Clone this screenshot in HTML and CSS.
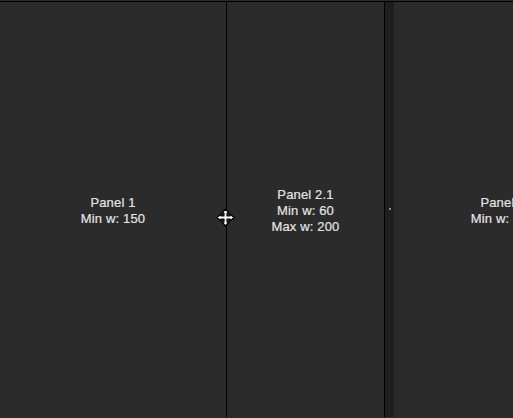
FILE: index.html
```
<!DOCTYPE html>
<html lang="en">
<head>
  <meta charset="UTF-8" />
  <title>Panels</title>
  <link rel="stylesheet" href="styles.css">
</head>
<body>
<div class="panel-group">
  <div class="panel panel-one">
    <div class="panel-label">Panel 1<br>Min w: 150</div>
  </div>
  <div class="panel panel-two">
    <div class="panel-label">Panel 2.1<br>Min w: 60<br>Max w: 200</div>
  </div>
  <div class="resize-handle"><span class="handle-dot"></span></div>
  <div class="panel panel-three">
    <div class="panel-label">Panel 3<br>Min w: 150</div>
  </div>
</div>
<!-- mouse cursor over the divider -->
<svg class="move-cursor" width="19" height="19" viewBox="0 0 19 19">
  <path d="M9.5 1 L13 5 L11 5 L11 8 L14 8 L14 6 L18 9.5 L14 13 L14 11 L11 11 L11 14 L13 14 L9.5 18 L6 14 L8 14 L8 11 L5 11 L5 13 L1 9.5 L5 6 L5 8 L8 8 L8 5 L6 5 Z" fill="#fff" stroke="#000" stroke-width="1.2" stroke-linejoin="round"/>
</svg>
</body>
</html>
```
FILE: styles.css
```
* { box-sizing: border-box; }
html, body { height:100%; }
body { margin:0; padding-top:1px; background:#2b2b2b; font-family:'Liberation Sans',Arial,sans-serif; color:#e4e4e4; overflow:hidden; position:relative; }
.panel-group { display:flex; height:calc(100% - 1px); border-top:1px solid #000; overflow:hidden; }
.panel { display:flex; align-items:center; justify-content:center; flex-shrink:0; padding-top:2px; background:#2b2b2b; }
.panel-label { font-size:13px; line-height:16px; text-align:center; letter-spacing:0.15px; -webkit-text-stroke:0.2px #e4e4e4; }
.panel-one { width:227px; border-right:1px solid #000; }
.panel-two { width:158px; border-right:1px solid #000; }
.panel-three { width:218px; }
.resize-handle { width:9px; flex-shrink:0; background:#1f1f1f; display:flex; align-items:center; justify-content:center; }
.handle-dot { width:2px; height:2px; background:#8a8a8a; margin-top:-2px; }
.move-cursor { position:absolute; left:216px; top:208px; }
```
